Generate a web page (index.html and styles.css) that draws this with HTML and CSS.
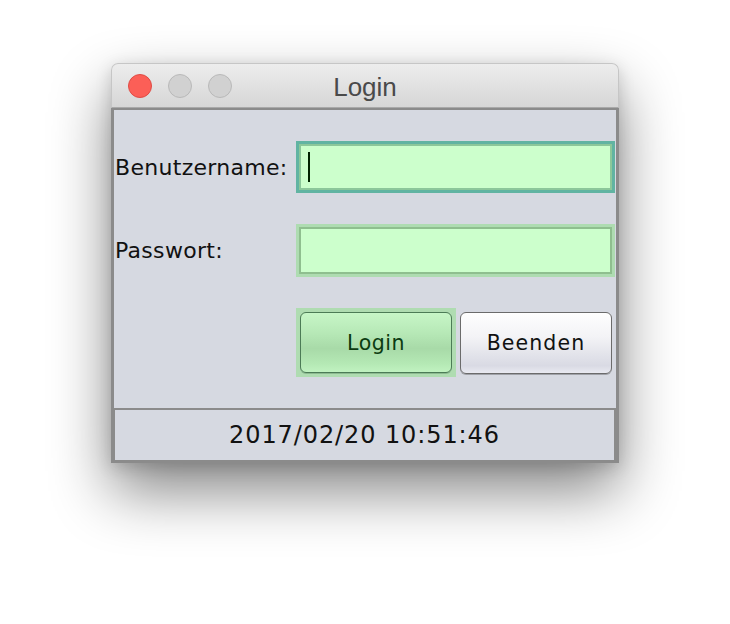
FILE: index.html
```html
<!DOCTYPE html>
<html lang="de">
<head>
<meta charset="utf-8">
<title>Login</title>
<link rel="stylesheet" href="styles.css">
</head>
<body>
<div class="window">
  <div class="titlebar">
    <div class="lights">
      <span class="light red"></span>
      <span class="light gray"></span>
      <span class="light gray"></span>
    </div>
    <div class="title">Login</div>
    <div></div>
  </div>
  <div class="content">
    <div class="form">
      <label class="label">Benutzername:</label>
      <div class="field focused"><div class="field-inner"><span class="caret"></span></div></div>
      <label class="label">Passwort:</label>
      <div class="field tall"><div class="field-inner"></div></div>
      <div></div>
      <div class="buttons">
        <div class="ring"><button class="btn btn-login">Login</button></div>
        <button class="btn btn-quit">Beenden</button>
      </div>
    </div>
    <div class="status">2017/02/20 10:51:46</div>
  </div>
</div>
</body>
</html>
```
FILE: styles.css
```css
html, body {
  margin: 0;
  padding: 0;
  background: #ffffff;
}
body {
  width: 730px;
  height: 624px;
  overflow: hidden;
  font-family: "DejaVu Sans", "Liberation Sans", sans-serif;
}
.window {
  width: 508px;
  margin: 63px 0 0 111px;
  border-radius: 7px 7px 0 0;
  box-shadow: 0 28px 60px rgba(0, 0, 0, 0.48), 0 4px 16px rgba(0, 0, 0, 0.15);
}
.titlebar {
  box-sizing: border-box;
  height: 45px;
  display: grid;
  grid-template-columns: 1fr auto 1fr;
  align-items: center;
  background: linear-gradient(#ededed, #d6d6d6);
  border: 1px solid #c6c6c6;
  border-bottom: 1px solid #a9a9a9;
  border-radius: 7px 7px 0 0;
}
.lights {
  display: flex;
  gap: 16px;
  padding-left: 16px;
  padding-top: 1px;
}
.light {
  box-sizing: border-box;
  width: 24px;
  height: 24px;
  border-radius: 50%;
}
.light.red {
  background: #fc5f57;
  border: 1px solid #df4c45;
}
.light.gray {
  background: #d1d1d1;
  border: 1px solid #b9b9b9;
}
.title {
  font-family: "Liberation Sans", Arial, sans-serif;
  font-size: 26px;
  color: #4a4a4a;
  line-height: 30px;
  padding-top: 2px;
}
.content {
  background: #d6d9e1;
  border: 3px solid #8b8b8b;
  border-top: 2px solid #8b8b8b;
  padding-top: 31px;
}
.form {
  display: grid;
  grid-template-columns: 182px 319px;
  grid-template-rows: 52px 53px 69px;
  row-gap: 31px;
  align-items: center;
  margin-bottom: 31px;
}
.label {
  padding-left: 1px;
  font-size: 22px;
  letter-spacing: 0.3px;
  color: #111111;
}
.field {
  box-sizing: border-box;
  height: 52px;
  border: 3px solid #aedcb1;
}
.field.tall {
  height: 53px;
}
.field.focused {
  border-color: #61b4a2;
}
.field-inner {
  box-sizing: border-box;
  height: 100%;
  background: #ccffcc;
  border: 2px solid #8fbf8f;
  padding: 6px 0 0 7px;
}
.field.focused .field-inner {
  border-color: #8cc79a;
}
.caret {
  display: block;
  width: 2px;
  height: 30px;
  background: #002200;
}
.buttons {
  display: flex;
  align-items: flex-start;
  height: 69px;
  align-self: start;
}
.ring {
  box-sizing: border-box;
  width: 160px;
  height: 69px;
  padding: 4px;
  background: #afdcb1;
}
.btn {
  box-sizing: border-box;
  display: block;
  width: 152px;
  height: 61px;
  margin: 0;
  padding: 0;
  border-radius: 6px;
  font-family: "DejaVu Sans", "Liberation Sans", sans-serif;
  font-size: 20.5px;
  letter-spacing: 0.5px;
}
.btn-login {
  border: 1.5px solid #4c7b56;
  color: #0b3a10;
  background: linear-gradient(#c7f6c7 0%, #b6e8b6 35%, #a8daa8 60%, #b4e8b4 85%, #c0f2c0 100%);
  box-shadow: 0 1px 0 rgba(60, 110, 70, 0.3);
}
.btn-quit {
  height: 62px;
  margin: 4px 0 0 4px;
  border: 1.5px solid #6b6b6b;
  color: #111111;
  letter-spacing: 1.1px;
  background: linear-gradient(#fefefe 0%, #f3f3f6 40%, #e2e3ea 70%, #d9dae4 88%, #e9eaf1 100%);
  box-shadow: 0 1px 0 rgba(0, 0, 0, 0.25);
}
.status {
  box-sizing: border-box;
  height: 52px;
  border-top: 2px solid #8b8b8b;
  border-left: 1px solid #8b8b8b;
  border-right: 2px solid #8b8b8b;
  display: flex;
  align-items: center;
  justify-content: center;
  font-size: 24px;
  letter-spacing: 0.9px;
  color: #111111;
}
```
